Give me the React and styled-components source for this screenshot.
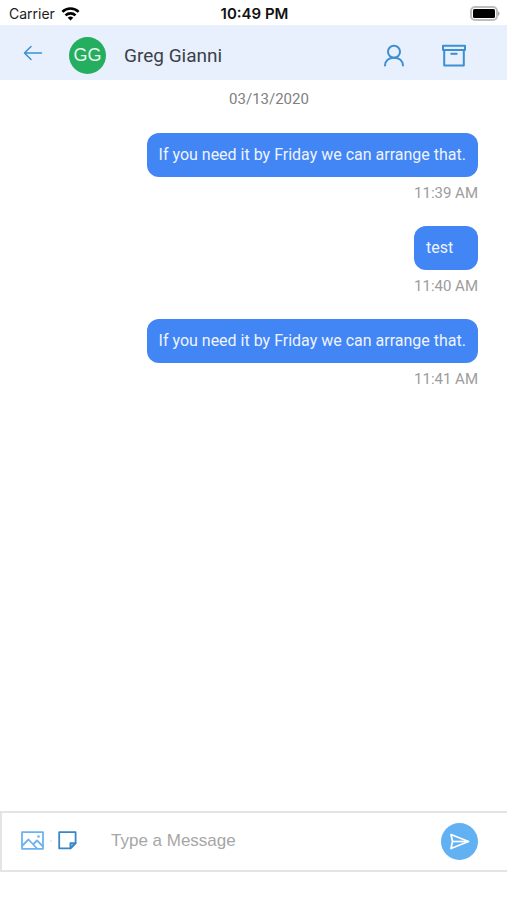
import React from "react";
import styled, { createGlobalStyle } from "styled-components";

const GlobalStyle = createGlobalStyle`
  *, *::before, *::after { box-sizing: border-box; }
  body {
    margin: 0;
    background: #ffffff;
    font-family: Roboto, "Liberation Sans", sans-serif;
  }
  button, input { font: inherit; }
`;

const Screen = styled.div`
  display: flex;
  flex-direction: column;
  min-height: 100vh;
  padding-bottom: 28px;
`;

const StatusBar = styled.div`
  display: grid;
  grid-template-columns: 1fr auto 1fr;
  align-items: center;
  height: 25px;
  padding: 2px 7px 0 9px;
  font-family: Inter, Roboto, sans-serif;
  font-size: 14px;
  line-height: 20px;
  color: #1c1c1c;
`;

const Carrier = styled.div`
  display: flex;
  align-items: center;
  gap: 6px;
`;

const Clock = styled.time`
  font-size: 15px;
  font-weight: 600;
  color: #111111;
`;

const BatterySlot = styled.div`
  display: flex;
  justify-content: flex-end;
`;

const Header = styled.header`
  display: flex;
  align-items: center;
  height: 55px;
  padding: 6px 41px 0 20px;
  background: #e8f0fd;
`;

const IconButton = styled.button`
  display: flex;
  flex: none;
  padding: 0;
  border: 0;
  background: none;
  color: ${(p) => p.$color || "#3d8fd0"};
  cursor: pointer;
`;

const BackButton = styled(IconButton)`
  padding-bottom: 6px;
`;

const Avatar = styled.div`
  display: flex;
  flex: none;
  align-items: center;
  justify-content: center;
  width: 37px;
  height: 37px;
  margin: 0 18px 0 23px;
  border-radius: 50%;
  background: #25ae60;
  color: #e6f7ec;
  font-family: "Liberation Sans", sans-serif;
  font-size: 18px;
`;

const ContactName = styled.h1`
  flex: 1;
  margin: 0;
  font-size: 19px;
  font-weight: 400;
  line-height: 24px;
  color: #3b4048;
`;

const HeaderActions = styled.div`
  display: flex;
  gap: 36px;
`;

const Thread = styled.main`
  flex: 1;
  display: flex;
  flex-direction: column;
  align-items: flex-end;
  padding: 9px 29px 0 60px;
`;

const DateLabel = styled.time`
  align-self: center;
  margin-bottom: 24px;
  font-size: 15px;
  line-height: 20px;
  color: #808080;
`;

const Message = styled.article`
  display: flex;
  flex-direction: column;
  margin-bottom: 23px;
`;

const Bubble = styled.p`
  margin: 0;
  padding: 11px 12px;
  border-radius: 12px;
  background: #4285f4;
  color: #eef4ff;
  font-size: 16px;
  line-height: 22px;
`;

const SentAt = styled.time`
  align-self: flex-end;
  margin-top: 6px;
  font-size: 15px;
  line-height: 20px;
  color: #9c9c9c;
`;

const Composer = styled.form`
  display: flex;
  align-items: center;
  height: 61px;
  padding: 0 29px 0 19px;
  border: solid #e4e4e4;
  border-width: 2px 0 2px 2px;
`;

const Attachments = styled.div`
  display: flex;
  align-items: center;
  gap: 6px;
  padding-bottom: 2px;
`;

const Dot = styled.span`
  width: 2px;
  height: 2px;
  border-radius: 50%;
  background: #e2e6ea;
`;

const MessageInput = styled.input`
  flex: 1;
  min-width: 0;
  margin: 0 16px 2px 34px;
  padding: 0;
  border: 0;
  outline: none;
  background: transparent;
  font-family: "Liberation Sans", Arial, sans-serif;
  font-size: 17px;
  line-height: 24px;
  color: #3b4048;
  &::placeholder { color: #a6a6a6; opacity: 1; }
`;

const SendButton = styled.button`
  display: flex;
  flex: none;
  align-items: center;
  justify-content: center;
  width: 37px;
  height: 37px;
  padding: 0;
  border: 0;
  border-radius: 50%;
  background: #62b1f2;
  color: #ffffff;
  cursor: pointer;
`;

const WifiIcon = () => (
  <svg width="19" height="14" viewBox="0 0 18 14" fill="none" stroke="#000" strokeWidth="2.6" aria-hidden="true">
    <path d="M0.9 4.9a11.5 11.5 0 0 1 16.2 0" />
    <path d="M4 8.4a7.1 7.1 0 0 1 10 0" />
    <path d="M9 13.6L6.2 10.8a4 4 0 0 1 5.6 0z" fill="#000" stroke="none" />
  </svg>
);

const BatteryIcon = () => (
  <svg width="30" height="15" viewBox="0 0 30 15" aria-hidden="true">
    <rect x="1" y="1" width="26" height="13" rx="4" fill="#fff" stroke="#bdbdbd" strokeWidth="2" />
    <rect x="3" y="3" width="22" height="9" rx="1.5" fill="#000" />
    <path d="M28 5.2c2 .8 2 3.8 0 4.6z" fill="#a8a8a8" />
  </svg>
);

const BackIcon = () => (
  <svg width="26" height="18" viewBox="0 0 26 18" fill="none" stroke="currentColor" strokeWidth="1.5" strokeLinecap="round" strokeLinejoin="round" aria-hidden="true">
    <path d="M21.5 9H4.5M11 2.5L4.5 9l6.5 6.5" />
  </svg>
);

const PersonIcon = () => (
  <svg width="24" height="24" viewBox="0 0 24 24" fill="none" stroke="currentColor" strokeWidth="2" strokeLinecap="round" aria-hidden="true">
    <circle cx="12" cy="7.7" r="6" />
    <path d="M3 21.5c.3-4.700 3.700-7.800 9-7.800s8.700 3.100 9 7.800" />
  </svg>
);

const ArchiveIcon = () => (
  <svg width="24" height="24" viewBox="0 0 24 24" fill="none" stroke="currentColor" strokeWidth="2" strokeLinejoin="round" aria-hidden="true">
    <path d="M1 1.7h22V6H1z" />
    <path d="M2.200 6v15.500h19.600V6" />
    <path d="M8.5 9.8h7" />
  </svg>
);

const PictureIcon = () => (
  <svg width="23" height="19" viewBox="0 0 23 19" fill="none" stroke="currentColor" strokeWidth="1.8" strokeLinejoin="round" aria-hidden="true">
    <path d="M1 1.2h21v16.6H1z" />
    <path d="M1 15l6.500-6.500 8.500 9M12.500 13l3.500-3.500 6 6" />
    <circle cx="17.5" cy="5.5" r="1.3" fill="currentColor" stroke="none" />
  </svg>
);

const NoteIcon = () => (
  <svg width="19" height="19" viewBox="0 0 19 19" fill="none" stroke="currentColor" strokeWidth="1.8" strokeLinejoin="round" aria-hidden="true">
    <path d="M1.2 1.2h16.400v11l-5.200 5.200H1.200z" />
    <path d="M12.4 17.400v-5.200h5.200z" fill="currentColor" fillOpacity="0.45" />
  </svg>
);

const SendIcon = () => (
  <svg width="20" height="18" viewBox="0 0 20 18" fill="none" stroke="currentColor" strokeWidth="1.7" strokeLinejoin="round" aria-hidden="true">
    <path d="M1 1.500L18.500 8.500 1 15.500 2.500 8.500z" />
    <path d="M2.500 8.500h16" />
  </svg>
);

const MESSAGES = [
  { text: "If you need it by Friday we can arrange that.", time: "11:39 AM" },
  { text: "test", time: "11:40 AM" },
  { text: "If you need it by Friday we can arrange that.", time: "11:41 AM" },
];

export default function App() {
  return (
    <>
      <GlobalStyle />
      <Screen>
        <StatusBar>
          <Carrier>
            Carrier
            <WifiIcon />
          </Carrier>
          <Clock>10:49 PM</Clock>
          <BatterySlot>
            <BatteryIcon />
          </BatterySlot>
        </StatusBar>
        <Header>
          <BackButton type="button" aria-label="Back">
            <BackIcon />
          </BackButton>
          <Avatar>GG</Avatar>
          <ContactName>Greg Gianni</ContactName>
          <HeaderActions>
            <IconButton type="button" aria-label="Contact details">
              <PersonIcon />
            </IconButton>
            <IconButton type="button" aria-label="Archive conversation">
              <ArchiveIcon />
            </IconButton>
          </HeaderActions>
        </Header>
        <Thread>
          <DateLabel>03/13/2020</DateLabel>
          {MESSAGES.map((m) => (
            <Message key={m.time}>
              <Bubble>{m.text}</Bubble>
              <SentAt>{m.time}</SentAt>
            </Message>
          ))}
        </Thread>
        <Composer onSubmit={(e) => e.preventDefault()}>
          <Attachments>
            <IconButton type="button" aria-label="Attach picture" $color="#6db3ee">
              <PictureIcon />
            </IconButton>
            <Dot />
            <IconButton type="button" aria-label="Add note" $color="#3a86c8">
              <NoteIcon />
            </IconButton>
          </Attachments>
          <MessageInput type="text" aria-label="Message" placeholder="Type a Message" />
          <SendButton type="submit" aria-label="Send">
            <SendIcon />
          </SendButton>
        </Composer>
      </Screen>
    </>
  );
}
